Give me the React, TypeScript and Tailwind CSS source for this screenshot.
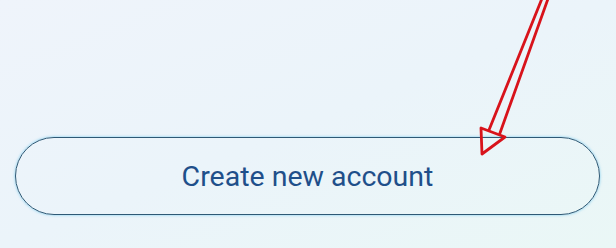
import React from "react";

export default function App() {
  return (
    <div className="relative w-[616px] h-[248px] overflow-hidden bg-gradient-to-br from-[#eff4fb] via-[#ebf4fa] to-[#eaf7f6]">
      <div className="flex flex-col pt-[137px] px-[15px]">
        <div className="flex items-center justify-center h-[78px] w-[585px] rounded-full border-[1.6px] border-[#2f5975] shadow-[0_0_2px_1px_rgba(140,210,240,0.6)]">
          <span
            className="text-[28.5px] leading-none text-[#1f4f8a] pt-[2px]"
            style={{ fontFamily: "Roboto, 'Liberation Sans', sans-serif" }}
          >
            Create new account
          </span>
        </div>
      </div>
      <svg
        className="absolute left-0 top-0"
        width="616"
        height="248"
        viewBox="0 0 616 248"
        fill="none"
      >
        <g stroke="#d8131b" strokeWidth="2.8" strokeLinejoin="round" strokeLinecap="round">
          <line x1="543" y1="-4" x2="489" y2="130" />
          <line x1="549" y1="-4" x2="500" y2="133" />
          <polygon points="481,128 505,137 482,154" />
        </g>
      </svg>
    </div>
  );
}
